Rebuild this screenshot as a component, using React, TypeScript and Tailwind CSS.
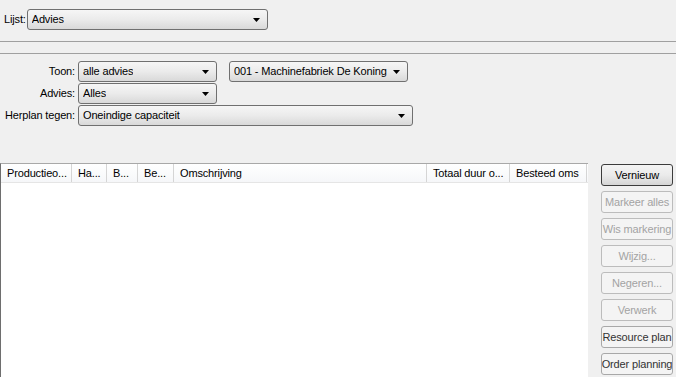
import React from 'react';

const Arrow = () => (
  <svg width="7" height="4" viewBox="0 0 7 4" className="shrink-0">
    <path d="M0 0h7L3.5 4z" fill="#000" />
  </svg>
);

interface ComboProps {
  value: string;
  className?: string;
}

const Combo: React.FC<ComboProps> = ({ value, className = '' }) => (
  <div
    className={`flex h-[21px] items-center justify-between rounded-[3px] border border-[#707070] bg-gradient-to-b from-[#f6f6f6] via-[#ebebeb] to-[#d9d9d9] pl-[4px] pr-[7px] text-black ${className}`}
  >
    <span className="truncate">{value}</span>
    <Arrow />
  </div>
);

interface BtnProps {
  label: string;
  variant?: 'default' | 'disabled' | 'normal';
}

const Btn: React.FC<BtnProps> = ({ label, variant = 'disabled' }) => {
  const style =
    variant === 'default'
      ? 'border-[#3c3c3c] bg-gradient-to-b from-[#f4f4f4] via-[#ebebeb] to-[#d5d5d5] text-black'
      : variant === 'normal'
        ? 'border-[#a8a8a8] bg-[#f4f4f4] text-[#333]'
        : 'border-[#bcbcbc] bg-[#f4f4f4] text-[#a3a3a3]';
  return (
    <div
      className={`flex h-[22px] w-[72px] items-center justify-center overflow-hidden whitespace-nowrap rounded-[3px] border ${style}`}
    >
      {label}
    </div>
  );
};

const columns = [
  { title: 'Productieo...', w: 'w-[71px]' },
  { title: 'Ha...', w: 'w-[35px]' },
  { title: 'B...', w: 'w-[31px]' },
  { title: 'Be...', w: 'w-[36px]' },
  { title: 'Omschrijving', w: 'w-[253px]' },
  { title: 'Totaal duur o...', w: 'w-[83px]' },
  { title: 'Besteed oms', w: 'w-[77px]' },
];

const buttons: BtnProps[] = [
  { label: 'Vernieuw', variant: 'default' },
  { label: 'Markeer alles' },
  { label: 'Wis markering' },
  { label: 'Wijzig...' },
  { label: 'Negeren...' },
  { label: 'Verwerk' },
  { label: 'Resource plan', variant: 'normal' },
  { label: 'Order planning', variant: 'normal' },
];

export default function App() {
  return (
    <div className="flex h-[377px] w-[676px] flex-col overflow-hidden bg-[#f0f0f0] font-['Liberation_Sans',Arial,sans-serif] text-[11px] tracking-[-0.15px] text-black">
      {/* lijst selectie */}
      <div className="flex items-center pl-[4px] pt-[9px]">
        <span className="mr-px">Lijst:</span>
        <Combo value="Advies" className="w-[241px]" />
      </div>
      <div className="mt-[11px] h-px bg-[#a0a0a0]" />
      <div className="mt-[11px] h-px bg-[#a0a0a0]" />

      {/* filters */}
      <div className="mt-[7px] grid grid-cols-[75px_auto] gap-x-[3px] gap-y-px">
        <span className="self-center text-right">Toon:</span>
        <div className="flex gap-[12px]">
          <Combo value="alle advies" className="w-[139px]" />
          <Combo value="001 - Machinefabriek De Koning" className="w-[179px]" />
        </div>
        <span className="self-center text-right">Advies:</span>
        <Combo value="Alles" className="w-[139px]" />
        <span className="self-center text-right">Herplan tegen:</span>
        <Combo value="Oneindige capaciteit" className="w-[335px]" />
      </div>

      {/* lijst + knoppen */}
      <div className="mt-[37px] flex flex-1">
        <div className="flex w-[588px] flex-col border-l border-t border-l-[#6e6e6e] border-t-[#a8a8a8] bg-white">
          <div className="flex h-[19px] border-b border-[#e5e5e5] bg-gradient-to-b from-white to-[#f6f7f9]">
            {columns.map((c) => (
              <div
                key={c.title}
                className={`${c.w} flex shrink-0 items-center truncate border-r border-[#d5d5d5] pl-[6px]`}
              >
                {c.title}
              </div>
            ))}
          </div>
          <div className="flex-1" />
        </div>
        <div className="flex flex-col gap-[5px] pl-[13px] pt-px">
          {buttons.map((b) => (
            <Btn key={b.label} {...b} />
          ))}
        </div>
      </div>
    </div>
  );
}
